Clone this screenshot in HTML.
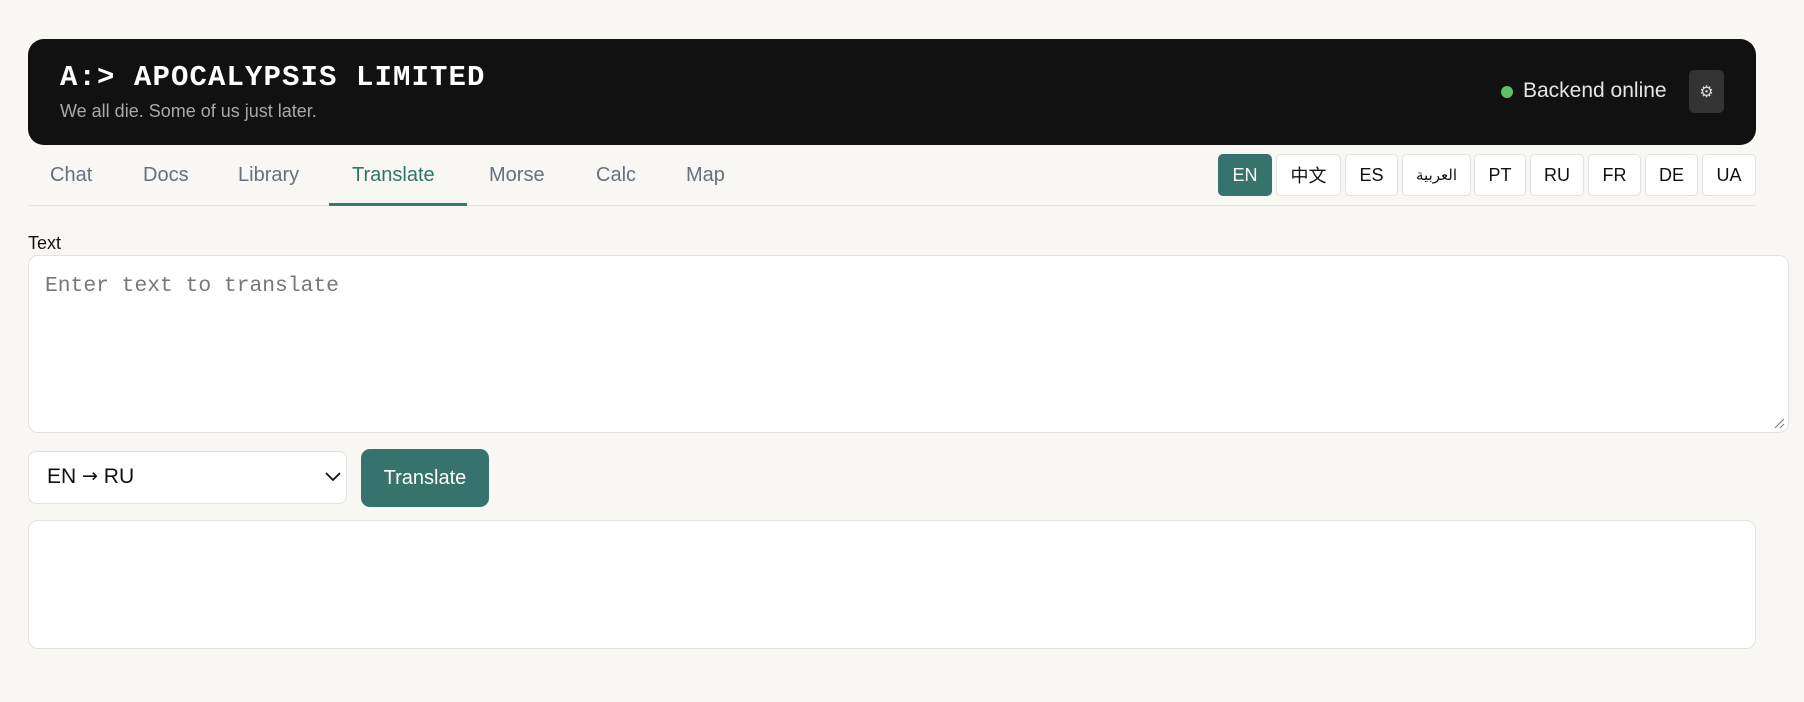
<!DOCTYPE html>
<html><head><meta charset="utf-8"><style>
*{box-sizing:border-box;margin:0;padding:0}
body{width:1804px;height:702px;background:#f8f7f3;font-family:"Liberation Sans","Noto Sans CJK SC",sans-serif;position:relative;overflow:hidden;color:#111}
.abs{position:absolute}
.hdr{left:28px;top:39px;width:1728px;height:106px;background:#111;border-radius:16px}
.title{left:60px;top:61px;font-family:"Liberation Mono",monospace;font-weight:bold;font-size:29px;color:#fff;letter-spacing:1.1px;white-space:nowrap}
.sub{left:60px;top:101px;font-size:18px;color:#a9a9a9;white-space:nowrap}
.dot{left:1501px;top:86px;width:12px;height:12px;border-radius:50%;background:#5cc168}
.online{left:1523px;top:79px;font-size:21px;color:#e6e6e6;white-space:nowrap}
.gear{left:1689px;top:70px;width:35px;height:43px;background:#333;border-radius:5px;color:#ddd;font-size:16px;display:flex;align-items:center;justify-content:center}
.tab{top:164px;font-size:20px;color:#667080;white-space:nowrap}
.line{left:28px;top:205px;width:1728px;height:1px;background:#e3e3e0}
.ul{left:329px;top:203px;width:138px;height:3px;background:#357a70}
.lb{top:154px;height:42px;border:1px solid #e2e2e2;background:#fff;border-radius:5px;font-size:18px;display:flex;align-items:center;justify-content:center;color:#111}
.lb.on{background:#37736d;color:#fff;border-color:#37736d}
.lbl{left:28px;top:233px;font-size:18px}
.ta{left:28px;top:255px;width:1761px;height:178px;background:#fff;border:1px solid #e2e2e2;border-radius:10px}
.ph{left:45px;top:274px;font-family:"Liberation Mono",monospace;font-size:21.3px;color:#777;white-space:nowrap}
.sel{left:28px;top:451px;width:319px;height:53px;background:#fff;border:1px solid #e2e2e2;border-radius:8px}
.selt{left:47px;top:465px;font-size:21px;white-space:nowrap}
.btn{left:361px;top:449px;width:128px;height:58px;background:#37736d;border-radius:9px;color:#fff;font-size:20px;display:flex;align-items:center;justify-content:center}
.out{left:28px;top:520px;width:1728px;height:129px;background:#fff;border:1px solid #e2e2e2;border-radius:10px}
</style></head><body>
<div class="abs hdr"></div>
<div class="abs title">A:&gt; APOCALYPSIS LIMITED</div>
<div class="abs sub">We all die. Some of us just later.</div>
<div class="abs dot"></div>
<div class="abs online">Backend online</div>
<div class="abs gear">⚙</div>
<div class="abs tab" style="left:50px">Chat</div>
<div class="abs tab" style="left:143px">Docs</div>
<div class="abs tab" style="left:238px">Library</div>
<div class="abs tab" style="left:352px;color:#2f7468">Translate</div>
<div class="abs tab" style="left:489px">Morse</div>
<div class="abs tab" style="left:596px">Calc</div>
<div class="abs tab" style="left:686px">Map</div>
<div class="abs line"></div>
<div class="abs ul"></div>
<div class="abs lb on" style="left:1218px;width:54px">EN</div>
<div class="abs lb" style="left:1276px;width:65px">中文</div>
<div class="abs lb" style="left:1345px;width:53px">ES</div>
<div class="abs lb" style="left:1402px;width:69px;font-size:15px">العربية</div>
<div class="abs lb" style="left:1474px;width:52px">PT</div>
<div class="abs lb" style="left:1530px;width:54px">RU</div>
<div class="abs lb" style="left:1588px;width:53px">FR</div>
<div class="abs lb" style="left:1645px;width:53px">DE</div>
<div class="abs lb" style="left:1702px;width:54px">UA</div>
<div class="abs lbl">Text</div>
<div class="abs ta"></div>
<div class="abs ph">Enter text to translate</div>
<svg class="abs" style="left:1773px;top:417px" width="12" height="12"><path d="M2 11L11 2M7 11L11 7" stroke="#777" stroke-width="1"/></svg>
<div class="abs sel"></div>
<div class="abs selt">EN <span style="font-family:'DejaVu Sans',sans-serif;font-size:19px;position:relative;top:-1px">→</span> RU</div>
<svg class="abs" style="left:325px;top:472px" width="16" height="10"><path d="M1 1L8 8L15 1" stroke="#111" stroke-width="1.8" fill="none"/></svg>
<div class="abs btn">Translate</div>
<div class="abs out"></div>
</body></html>
